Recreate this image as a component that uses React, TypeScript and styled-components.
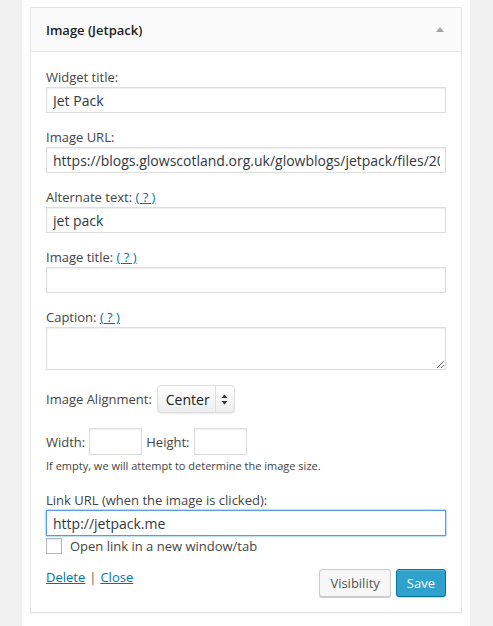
import React from 'react';
import styled, { createGlobalStyle } from 'styled-components';

const GlobalStyle = createGlobalStyle`
  html, body {
    margin: 0;
    padding: 0;
    background: #f1f1f1;
  }
  body {
    font-family: 'Open Sans', 'Liberation Sans', sans-serif;
    color: #444;
  }
`;

const App = () => {
  return (
    <>
      <GlobalStyle />
      <Column>
        <Widget>
          <Header>
            <HeaderTitle>Image (Jetpack)</HeaderTitle>
            <Arrow />
          </Header>
          <Body>
            <Field>
              <Label>Widget title:</Label>
              <TextInput defaultValue="Jet Pack" />
            </Field>
            <Field>
              <Label>Image URL:</Label>
              <TextInput defaultValue="https://blogs.glowscotland.org.uk/glowblogs/jetpack/files/2015/05/jetpack.png" />
            </Field>
            <Field>
              <Label>
                Alternate text: <HelpLink href="#">( ? )</HelpLink>
              </Label>
              <TextInput defaultValue="jet pack" />
            </Field>
            <Field>
              <Label>
                Image title: <HelpLink href="#">( ? )</HelpLink>
              </Label>
              <TextInput defaultValue="" />
            </Field>
            <Field>
              <Label>
                Caption: <HelpLink href="#">( ? )</HelpLink>
              </Label>
              <TextArea defaultValue="" />
            </Field>
            <AlignRow>
              <InlineLabel>Image Alignment:</InlineLabel>
              <SelectBox>
                <SelectText>Center</SelectText>
                <SelectArrows>
                  <svg width="7" height="11" viewBox="0 0 7 11">
                    <path d="M3.5 0.5 L6.5 4 L0.5 4 Z" fill="#333" />
                    <path d="M3.5 10.5 L6.5 7 L0.5 7 Z" fill="#333" />
                  </svg>
                </SelectArrows>
              </SelectBox>
            </AlignRow>
            <SizeRow>
              <InlineLabel>Width:</InlineLabel>
              <SmallInput />
              <InlineLabel>Height:</InlineLabel>
              <SmallInput />
            </SizeRow>
            <Hint>If empty, we will attempt to determine the image size.</Hint>
            <Field $last>
              <Label>Link URL (when the image is clicked):</Label>
              <TextInput defaultValue="http://jetpack.me" $focused />
            </Field>
            <CheckRow>
              <CheckBox />
              <span>Open link in a new window/tab</span>
            </CheckRow>
            <Footer>
              <Links>
                <ActionLink href="#">Delete</ActionLink>
                <Sep>|</Sep>
                <ActionLink href="#">Close</ActionLink>
              </Links>
              <Buttons>
                <Button>Visibility</Button>
                <Button $primary>Save</Button>
              </Buttons>
            </Footer>
          </Body>
        </Widget>
      </Column>
    </>
  );
};

export default App;

const Column = styled.div`
  margin: 0 23px 0 22px;
  background: #fff;
  padding: 7px 8px 10px 8px;
  min-height: 626px;
  box-sizing: border-box;
`;
const Widget = styled.div`
  border: 1px solid #e5e5e5;
  background: #fff;
  box-shadow: 0 1px 1px rgba(0, 0, 0, 0.04);
`;
const Header = styled.div`
  display: flex;
  align-items: center;
  justify-content: space-between;
  height: 43px;
  padding: 0 15px;
  background: #fafafa;
  border-bottom: 1px solid #e5e5e5;
`;
const HeaderTitle = styled.h3`
  margin: 0;
  font-size: 13px;
  font-weight: 600;
  color: #222;
`;
const Arrow = styled.span`
  width: 0;
  height: 0;
  border-left: 4px solid transparent;
  border-right: 4px solid transparent;
  border-bottom: 5px solid #a0a5aa;
  margin-right: 2px;
`;
const Body = styled.div`
  padding: 16px 15px 15px 15px;
  font-size: 13px;
  color: #444;
`;
const Field = styled.div<{ $last?: boolean }>`
  display: flex;
  flex-direction: column;
  margin-bottom: ${p => (p.$last ? '0' : '15px')};
`;
const Label = styled.label`
  font-size: 13px;
  line-height: 19px;
  color: #444;
`;
const HelpLink = styled.a`
  color: #0073aa;
  text-decoration: underline;
`;
const TextInput = styled.input<{ $focused?: boolean }>`
  box-sizing: border-box;
  width: 400px;
  height: 26px;
  padding: 3px 5px 3px 6px;
  font-family: 'Open Sans', 'Liberation Sans', sans-serif;
  font-size: 14px;
  color: #32373c;
  border: 1px solid ${p => (p.$focused ? '#5b9dd9' : '#ddd')};
  box-shadow: ${p =>
    p.$focused ? '0 0 2px rgba(30, 140, 190, 0.8)' : 'inset 0 1px 2px rgba(0, 0, 0, 0.07)'};
  background: #fff;
  outline: none;
  margin: 0;
`;
const TextArea = styled.textarea`
  box-sizing: border-box;
  width: 400px;
  height: 43px;
  border: 1px solid #ddd;
  box-shadow: inset 0 1px 2px rgba(0, 0, 0, 0.07);
  outline: none;
  margin: 0;
  font-family: 'Open Sans', 'Liberation Sans', sans-serif;
`;
const AlignRow = styled.div`
  display: flex;
  align-items: center;
  gap: 5px;
  margin-top: 9px;
`;
const InlineLabel = styled.span`
  font-size: 13px;
  color: #444;
`;
const SelectBox = styled.div`
  display: flex;
  align-items: stretch;
  height: 28px;
  box-sizing: border-box;
  border: 1px solid #ddd;
  border-radius: 4px;
  background: linear-gradient(#fdfdfd, #eee);
  box-shadow: 0 1px 1px rgba(0, 0, 0, 0.08);
`;
const SelectText = styled.span`
  display: flex;
  align-items: center;
  padding: 0 5px 0 8px;
  font-size: 14px;
  color: #222;
  border-right: 1px solid #ddd;
`;
const SelectArrows = styled.span`
  display: flex;
  align-items: center;
  justify-content: center;
  width: 18px;
`;
const SizeRow = styled.div`
  display: flex;
  align-items: center;
  gap: 4px;
  margin-top: 15px;
`;
const SmallInput = styled.input`
  box-sizing: border-box;
  width: 53px;
  height: 27px;
  border: 1px solid #ddd;
  box-shadow: inset 0 1px 2px rgba(0, 0, 0, 0.07);
  outline: none;
  margin: 0;
`;
const Hint = styled.p`
  margin: 3px 0 18px 0;
  font-size: 11px;
  line-height: 15px;
  color: #444;
`;
const CheckRow = styled.label`
  display: flex;
  align-items: center;
  gap: 8px;
  height: 20px;
  font-size: 13px;
  color: #444;
`;
const CheckBox = styled.span`
  display: inline-block;
  width: 16px;
  height: 16px;
  box-sizing: border-box;
  border: 1px solid #b4b9be;
  box-shadow: inset 0 1px 2px rgba(0, 0, 0, 0.1);
  background: #fff;
`;
const Footer = styled.div`
  display: flex;
  justify-content: space-between;
  align-items: flex-start;
  margin-top: 12px;
`;
const Links = styled.div`
  display: flex;
  align-items: center;
  gap: 4px;
  font-size: 13px;
  line-height: 19px;
`;
const ActionLink = styled.a`
  color: #0073aa;
  text-decoration: underline;
`;
const Sep = styled.span`
  color: #666;
`;
const Buttons = styled.div`
  display: flex;
  gap: 5px;
  margin-top: 1px;
`;
const Button = styled.button<{ $primary?: boolean }>`
  height: 28px;
  box-sizing: border-box;
  padding: 0 10px;
  font-family: 'Open Sans', 'Liberation Sans', sans-serif;
  font-size: 13px;
  border-radius: 3px;
  border: 1px solid ${p => (p.$primary ? '#0074a2' : '#ccc')};
  background: ${p => (p.$primary ? '#2ea2cc' : '#f7f7f7')};
  color: ${p => (p.$primary ? '#fff' : '#555')};
  box-shadow: ${p =>
    p.$primary ? 'inset 0 1px 0 rgba(120,200,230,0.5), 0 1px 0 rgba(0,0,0,0.15)' : '0 1px 0 #ccc'};
`;
